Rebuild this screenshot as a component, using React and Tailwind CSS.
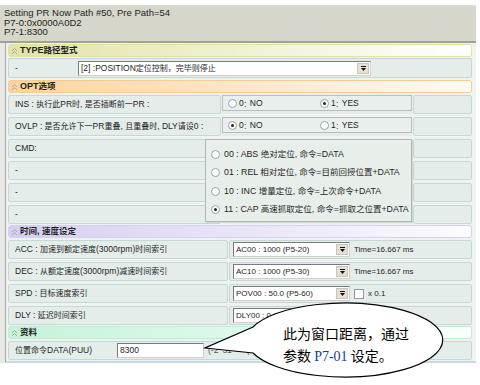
import React from "react";

const CJK = /([\u2e80-\u9fff\u3000-\u303f\uff00-\uffef]+)/;

// the chinese glyphs in the shot are narrower than the latin font, so they get their own size
function Txt({ children, cjk = "text-[8px]" }) {
  const parts = String(children).split(CJK);
  return parts.map((p, i) =>
    i % 2 === 1 ? (
      <span key={i} className={cjk}>
        {p}
      </span>
    ) : (
      <React.Fragment key={i}>{p}</React.Fragment>
    )
  );
}

const cell = "rounded-[2px] border border-[#c4d9d5] bg-[#e4edea]";

const Chevrons = () => (
  <svg width="7" height="8" viewBox="0 0 7 8" fill="none" stroke="#a9a9a9" strokeWidth="1">
    <path d="M1 4L3.5 1.5L6 4" />
    <path d="M1 7L3.5 4.5L6 7" />
  </svg>
);

const Section = ({ title, tone, className }) => (
  <div className={`flex items-center h-[13px] rounded-[3px] border pl-[2px] gap-[2px] font-bold text-[9px] ${tone} ${className}`}>
    <Chevrons />
    <span>
      <Txt cjk="text-[8.5px]">{title}</Txt>
    </span>
  </div>
);

const Radio = ({ on }) => (
  <span className="flex shrink-0 w-[9px] h-[9px] rounded-full border border-[#98a2a8] bg-white items-center justify-center">
    {on && <span className="w-[3px] h-[3px] rounded-full bg-[#222]" />}
  </span>
);

const Select = ({ w, children }) => (
  <div className={`flex h-[15px] shrink-0 bg-white border border-t-[#7a7a7a] border-l-[#7a7a7a] border-r-[#d4d0c8] border-b-[#d4d0c8] ${w}`}>
    <div className="flex-1 flex items-center pl-[2px] overflow-hidden whitespace-nowrap">{children}</div>
    <div className="w-[12px] my-[1px] mr-[1px] bg-[#e4e1d4] border border-[#c9c6b9] flex flex-col items-center justify-center gap-[1px]">
      <span className="w-[5px] h-[1px] bg-[#111]" />
      <svg width="5" height="3" viewBox="0 0 5 3">
        <path d="M0 0h5L2.5 3z" fill="#111" />
      </svg>
    </div>
  </div>
);

const RadioBox = ({ yes }) => (
  <div className="w-[190px] h-full bg-[#e4edea]">
    <div className="h-[16px] border border-[#bcbcbc] bg-[#e8efec] flex items-center pl-[5px] text-[8.5px]">
      <div className="w-[92px] flex items-center gap-[2px]">
        <Radio on={!yes} />
        <span>
          0<Txt cjk="text-[6px]">：</Txt>NO
        </span>
      </div>
      <div className="flex items-center gap-[2px]">
        <Radio on={yes} />
        <span>
          1<Txt cjk="text-[6px]">：</Txt>YES
        </span>
      </div>
    </div>
  </div>
);

const OptRow = ({ label, children, className }) => (
  <div className={`flex h-[19px] gap-[1px] ${className}`}>
    <div className={`${cell} w-[213px] flex items-center pl-[6px] whitespace-nowrap text-[8.5px]`}>
      <span>
        <Txt>{label}</Txt>
      </span>
    </div>
    {children || <div className="w-[190px] bg-[#e4edea]" />}
    <div className={`${cell} flex-1`} />
  </div>
);

const TimeRow = ({ label, children, className }) => (
  <div className={`flex h-[19px] gap-[1px] text-[8.5px] ${className}`}>
    <div className={`${cell} w-[220px] flex items-center pl-[6px] whitespace-nowrap`}>
      <span>
        <Txt>{label}</Txt>
      </span>
    </div>
    <div className={`${cell} flex-1 flex items-center pl-[3px] whitespace-nowrap text-[8px]`}>{children}</div>
  </div>
);

const cmdOptions = [
  "00 : ABS 绝对定位, 命令=DATA",
  "01 : REL 相对定位, 命令=目前回授位置+DATA",
  "10 : INC 增量定位, 命令=上次命令+DATA",
  "11 : CAP 高速抓取定位, 命令=抓取之位置+DATA",
];

export default function App() {
  return (
    <div className="relative w-[480px] h-[385px] overflow-hidden bg-white text-[10px] text-[#1e1e1e] font-['Liberation_Sans','Noto_Sans_CJK_SC',sans-serif] leading-none">
      <div className="mt-[5px] w-[476px]">
        <div className="h-[2px] bg-[#cfdfcb]" />
        <div className="h-[36px] bg-[#d7d6ca] border-b-2 border-[#a3a197] pl-[4px] pt-[1px] text-[9.5px] leading-[9.5px]">
          <div>Setting PR Now Path #50, Pre Path=54</div>
          <div>P7-0:0x0000A0D2</div>
          <div>P7-1:8300</div>
        </div>

        <div className="bg-[#e8e8e4]">
          <div className="ml-[5px] border-l border-[#a8a8a8] bg-[#eef3f1] pl-[2px] pr-[4px] pb-[1px] border-b-2 border-b-[#c6dbe6] flex flex-col">
            <Section
              title="TYPE路径型式"
              tone="border-[#e2e2a2] bg-gradient-to-r from-[#e3e3a6] to-white"
              className="mt-[1px]"
            />
            <div className={`${cell} mt-[1px] h-[20px] flex items-center text-[8.5px]`}>
              <span className="w-[69px] pl-[6px]">-</span>
              <Select w="w-[293px]">
                <span>
                  <Txt cjk="text-[8px]">[2] :POSITION定位控制，完毕则停止</Txt>
                </span>
              </Select>
            </div>

            <Section
              title="OPT选项"
              tone="border-[#f6cd8e] bg-gradient-to-r from-[#fbd3a0] to-[#fffaf4]"
              className="mt-[2px]"
            />
            <OptRow label="INS : 执行此PR时, 是否插断前一PR :" className="mt-[2px]">
              <RadioBox yes />
            </OptRow>
            <OptRow label="OVLP : 是否允许下一PR重叠, 且重叠时, DLY请设0 :" className="mt-[3px]">
              <RadioBox yes={false} />
            </OptRow>
            <OptRow label="CMD:" className="mt-[3px]" />
            <OptRow label="-" className="mt-[3px]" />
            <OptRow label="-" className="mt-[3px]" />
            <OptRow label="-" className="mt-[3px]" />

            <Section
              title="时间, 速度设定"
              tone="border-[#d6d0f2] bg-gradient-to-r from-[#d6cef1] to-[#fcfbff]"
              className="mt-[1px]"
            />
            <TimeRow label="ACC : 加速到额定速度(3000rpm)时间索引" className="mt-[2px]">
              <Select w="w-[117px]">AC00 : 1000 (P5-20)</Select>
              <span className="ml-[4px]">Time=16.667 ms</span>
            </TimeRow>
            <TimeRow label="DEC : 从额定速度(3000rpm)减速时间索引" className="mt-[3px]">
              <Select w="w-[117px]">AC10 : 1000 (P5-30)</Select>
              <span className="ml-[4px]">Time=16.667 ms</span>
            </TimeRow>
            <TimeRow label="SPD : 目标速度索引" className="mt-[3px]">
              <Select w="w-[117px]">POV00 : 50.0 (P5-60)</Select>
              <span className="ml-[4px] w-[10px] h-[10px] border border-[#8f9aa0] bg-white" />
              <span className="ml-[4px]">x 0.1</span>
            </TimeRow>
            <TimeRow label="DLY : 延迟时间索引" className="mt-[3px]">
              <Select w="w-[117px]">DLY00 : 0 (P5-40)</Select>
            </TimeRow>

            <Section
              title="资料"
              tone="border-[#bdeed2] bg-gradient-to-r from-[#c4f3d8] to-[#f8fffb]"
              className="mt-[1px]"
            />
            <div className={`${cell} mt-[2px] h-[19px] flex items-center whitespace-nowrap text-[8.5px]`}>
              <span className="w-[108px] pl-[6px]">
                <Txt>位置命令DATA(PUU)</Txt>
              </span>
              <div className="w-[87px] h-[15px] bg-white border border-t-[#7a7a7a] border-l-[#7a7a7a] border-r-[#d4d0c8] border-b-[#d4d0c8] flex items-center pl-[2px]">
                8300
              </div>
              <span className="ml-[4px] text-[#555]">(-2^31 ~ +(2^31-1))</span>
            </div>
          </div>
        </div>
      </div>

      {/* CMD option list, drawn over the rows */}
      <div className="absolute left-[205px] top-[139px] w-[207px] h-[83px] border border-[#b4b4b4] bg-[#e8efeb] pt-[5px] pl-[5px] text-[8.8px] shadow-[1px_1px_0_#d0d8d4]">
        {cmdOptions.map((o, i) => (
          <div key={o} className="h-[18.5px] flex items-center gap-[4px] whitespace-nowrap">
            <Radio on={i === 3} />
            <span>
              <Txt cjk="text-[8.5px]">{o}</Txt>
            </span>
          </div>
        ))}
      </div>

      {/* callout */}
      <svg className="absolute left-0 top-0 pointer-events-none" width="480" height="385" viewBox="0 0 480 385">
        <path d="M253 327A98 37 0 1 1 253 353L205 348Z" fill="white" stroke="black" strokeWidth="1.2" />
      </svg>
      <div className="absolute left-[283px] top-[322px] text-[14px] leading-[22px] text-black font-['Noto_Sans_CJK_SC',sans-serif] whitespace-nowrap">
        <div>此为窗口距离，通过</div>
        <div>
          参数 <span className="font-['Liberation_Serif',serif] text-[#1b3a8c]">P7-01</span> 设定。
        </div>
      </div>
    </div>
  );
}
